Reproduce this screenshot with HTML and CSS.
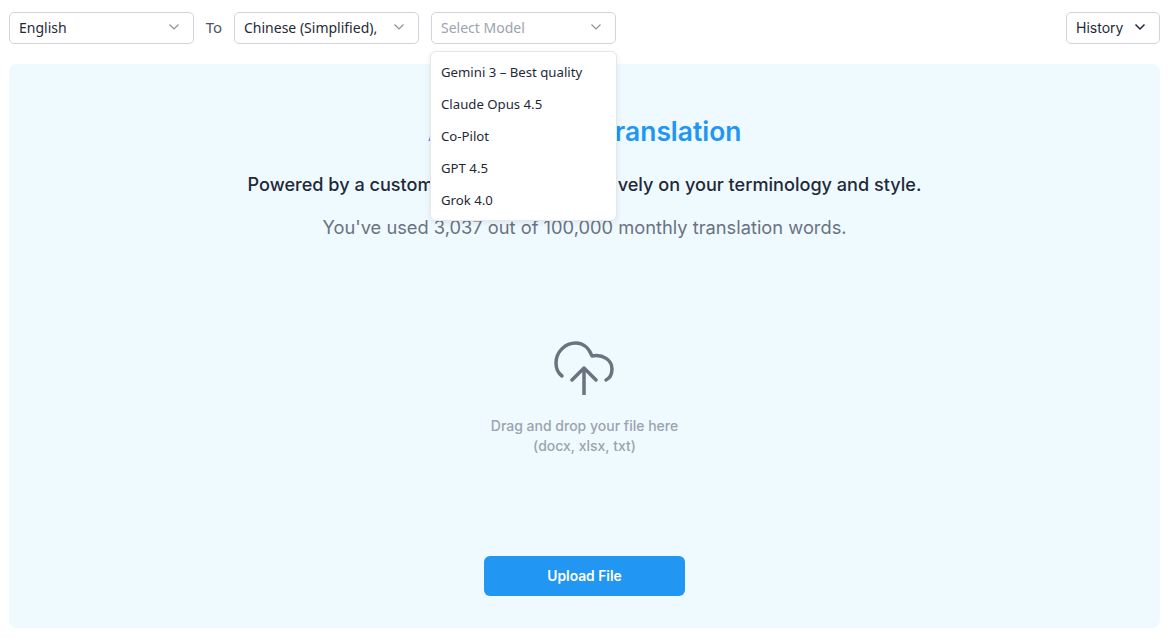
FILE: index.html
```html
<!DOCTYPE html>
<html>
<head>
    <title>Document Translation</title>
    <link rel="stylesheet" href="styles.css">
</head>
<body>
    <div class="toolbar">
        <button class="select">
            <span>English</span>
            <svg class="chevron" viewBox="0 0 12 12"><path d="M1.500 3.500l4.500 4.500 4.500-4.500"/></svg>
        </button>
        <span class="to">To</span>
        <button class="select">
            <span>Chinese (Simplified),</span>
            <svg class="chevron" viewBox="0 0 12 12"><path d="M1.500 3.500l4.500 4.500 4.500-4.500"/></svg>
        </button>
        <div class="model-wrap">
            <button class="select placeholder">
                <span>Select Model</span>
                <svg class="chevron" viewBox="0 0 12 12"><path d="M1.500 3.500l4.500 4.500 4.500-4.500"/></svg>
            </button>
            <ul class="menu">
                <li>Gemini 3 – Best quality</li>
                <li>Claude Opus 4.5</li>
                <li>Co-Pilot</li>
                <li>GPT 4.5</li>
                <li>Grok 4.0</li>
            </ul>
        </div>
        <button class="history">
            History
            <svg class="chevron dark" viewBox="0 0 12 12"><path d="M1.500 3.500l4.500 4.500 4.500-4.500"/></svg>
        </button>
    </div>

    <div class="panel">
        <h1>AI Document Translation</h1>
        <p class="lead">Powered by a custom AI that learns exclusively on your terminology and style.</p>
        <p class="usage">You've used 3,037 out of 100,000 monthly translation words.</p>

        <div class="drop">
            <svg class="cloud" viewBox="0 0 60 54">
                <path d="M8 35C4 32 2 27 2 22 2 11 11 2 22 2c7 0 13 5 16 13 11-2 20 4 20 13 0 5-2 9-6 11"/>
                <path d="M30 53V27M18 39l12-12 12 12"/>
            </svg>
            <div class="drop-text">Drag and drop your file here<br>(docx, xlsx, txt)</div>
        </div>

        <button class="upload">Upload File</button>
    </div>
</body>
</html>
```

FILE: styles.css
```css
* {
    box-sizing: border-box;
}
html, body {
    height: 100%;
}
body {
    margin: 0;
    padding: 12px 11px 10px 9px;
    display: flex;
    flex-direction: column;
    gap: 20px;
    background: #fff;
    font-family: Inter, "Liberation Sans", sans-serif;
    color: #1f2937;
}
button {
    font-family: inherit;
    cursor: pointer;
}
.toolbar {
    display: flex;
    align-items: center;
    height: 32px;
}
.select {
    width: 185px;
    height: 32px;
    padding: 0 13px 2px 9px;
    display: flex;
    align-items: center;
    justify-content: space-between;
    background: #fff;
    border: 1px solid #d1d5db;
    border-radius: 5px;
    font-family: "Noto Sans", sans-serif;
    font-size: 14px;
    color: #1f2937;
}
.placeholder {
    color: #9ca3af;
}
.chevron {
    width: 12px;
    height: 12px;
    fill: none;
    stroke: #8b929c;
    stroke-width: 1.2;
}
.chevron.dark {
    stroke: #1f2937;
    stroke-width: 1.500;
}
.to {
    width: 40px;
    padding-bottom: 2px;
    text-align: center;
    font-family: "Noto Sans", sans-serif;
    font-size: 15px;
    color: #4b5563;
}
.model-wrap {
    position: relative;
    margin-left: 12px;
}
.menu {
    position: absolute;
    top: 39px;
    left: -1px;
    width: 187px;
    margin: 0;
    padding: 4px 0;
    list-style: none;
    background: #fff;
    border: 1px solid #e5e7eb;
    border-radius: 6px;
    box-shadow: 0 2px 6px rgba(0, 0, 0, 0.08);
    z-index: 10;
}
.menu li {
    height: 32px;
    line-height: 32px;
    padding-left: 10px;
    font-family: "Noto Sans", sans-serif;
    font-size: 13.2px;
    color: #1f2937;
}
.history {
    margin-left: auto;
    width: 94px;
    height: 32px;
    padding: 0 13px 2px 9px;
    display: flex;
    align-items: center;
    justify-content: space-between;
    background: #fff;
    border: 1px solid #d1d5db;
    border-radius: 5px;
    font-size: 14px;
    color: #1f2937;
}
.panel {
    flex: 1;
    display: flex;
    flex-direction: column;
    align-items: center;
    padding: 50px 0 32px;
    background: #eefaff;
    border-radius: 8px;
}
h1 {
    margin: 0;
    height: 34px;
    line-height: 34px;
    font-size: 26.400px;
    font-weight: 600;
    color: #2196f3;
}
.lead {
    margin: 24px 0 0;
    line-height: 24px;
    font-size: 18.100px;
    font-weight: 500;
    color: #1f2937;
}
.usage {
    margin: 19px 0 0;
    line-height: 24px;
    font-size: 18.300px;
    color: #6b7280;
}
.drop {
    flex: 1;
    display: flex;
    flex-direction: column;
    align-items: center;
    padding-top: 102px;
}
.cloud {
    width: 60px;
    height: 54px;
    fill: none;
    stroke: #6b7280;
    stroke-width: 3.500;
    stroke-linecap: round;
    stroke-linejoin: round;
}
.drop-text {
    margin-top: 21px;
    text-align: center;
    font-size: 14px;
    font-weight: 500;
    line-height: 20px;
    color: #9ca3af;
}
.upload {
    width: 201px;
    height: 40px;
    padding-bottom: 2px;
    background: #2196f3;
    border: none;
    border-radius: 6px;
    font-size: 13.800px;
    font-weight: 600;
    color: #fff;
}
```
